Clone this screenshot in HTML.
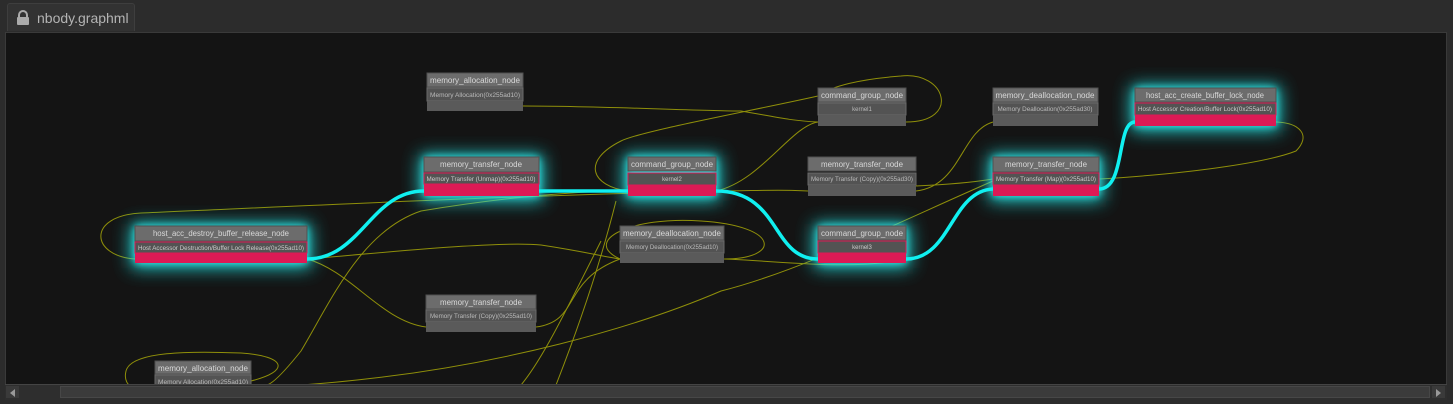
<!DOCTYPE html>
<html><head><meta charset="utf-8"><style>
html,body{margin:0;padding:0;width:1453px;height:404px;overflow:hidden;background:#2c2c2c;font-family:"Liberation Sans",sans-serif}
.tab{position:absolute;left:7px;top:3px;width:128px;height:28px;background:#323232;border:1px solid #3e3e3e;border-bottom:none;border-radius:3px 3px 0 0;box-sizing:border-box}
.tab span{position:absolute;left:29px;top:6px;font-size:14px;color:#b4b4b4}
.canvas{position:absolute;left:5px;top:32px;width:1442px;height:352px;background:#141414;border:1px solid #3a3a3a;border-bottom:none;box-sizing:border-box;overflow:hidden}
.sb{position:absolute;left:5px;top:384px;width:1442px;height:15px;background:#2e2e2e;border-top:1px solid #444}
.thumb{position:absolute;left:55px;top:1px;width:1370px;height:12px;background:#3b3b3b;border:1px solid #474747;box-sizing:border-box}
.btn{position:absolute;top:1px;width:13px;height:12px;background:#3a3a3a}
</style></head><body>
<div class="tab">
<svg style="position:absolute;left:7px;top:6px" width="16" height="15" viewBox="0 0 16 15"><path d="M4 7V5a4 4 0 0 1 8 0v2" fill="none" stroke="#aaa" stroke-width="2"/><rect x="2" y="7" width="12" height="8" rx="1" fill="#aaa"/></svg>
<span>nbody.graphml</span></div>
<div class="canvas">
<svg width="1442" height="352" viewBox="5 32 1442 352" xmlns="http://www.w3.org/2000/svg" style="position:absolute;left:0;top:0">
<defs>
<filter id="g" x="-50%" y="-100%" width="200%" height="300%"><feGaussianBlur stdDeviation="9"/></filter>
<filter id="g2" x="-50%" y="-100%" width="200%" height="300%"><feGaussianBlur stdDeviation="4"/></filter>
</defs>
<g fill="none" stroke="#8f8f0a" stroke-width="1">
<path d="M522 105 C600 105 700 110 740 110 C770 115 790 120 817 121"/>
<path d="M905 121 C960 121 945 70 900 75 C860 78 830 85 817 95 C750 110 640 130 620 140 C580 160 590 185 627 190"/>
<path d="M715 190 C760 180 790 125 817 121"/>
<path d="M715 190 C750 190 780 188 807 190"/>
<path d="M915 190 C960 185 960 130 992 121"/>
<path d="M1098 178 C1200 172 1270 160 1295 150 C1310 135 1300 122 1275 121"/>
<path d="M915 185 C960 183 980 180 992 178"/>
<path d="M134 258 C90 255 85 215 140 212 C300 205 500 195 715 190"/>
<path d="M306 258 C400 250 500 240 540 244 C580 250 600 255 619 258"/>
<path d="M306 258 C350 270 380 320 425 326"/>
<path d="M723 258 C780 258 780 225 700 220 C630 215 580 240 619 258"/>
<path d="M535 326 C580 320 560 280 619 258"/>
<path d="M627 190 C560 190 480 200 420 210 C360 230 330 300 300 350 C280 375 270 384 265 384"/>
<path d="M723 258 C780 260 850 270 905 258"/>
<path d="M300 384 C500 370 650 320 720 290 C800 270 900 220 992 180"/>
<path d="M250 380 C290 370 285 355 240 352 C190 350 130 350 125 370 C123 378 126 382 128 384"/>
<path d="M615 200 C600 260 580 320 555 384"/>
<path d="M600 240 C560 320 540 360 520 384"/>
</g>
<g fill="#20e0e0" filter="url(#g)" opacity="0.9">
<rect x="419" y="154" width="123" height="46"/><rect x="623" y="154" width="96" height="46"/>
<rect x="130" y="223" width="180" height="44"/><rect x="813" y="223" width="96" height="44"/>
<rect x="988" y="154" width="114" height="46"/><rect x="1130" y="85" width="149" height="45"/>
</g>
<g fill="#30f0f0" filter="url(#g2)">
<rect x="423" y="156" width="115" height="39"/><rect x="627" y="156" width="88" height="39"/>
<rect x="134" y="225" width="172" height="37"/><rect x="817" y="225" width="88" height="37"/>
<rect x="992" y="156" width="106" height="39"/><rect x="1134" y="87" width="141" height="38"/>
</g>
<g fill="none" stroke="#10f0f0" stroke-width="3.5">
<path d="M306 258 C360 258 370 190 423 190"/>
<path d="M538 190 L627 190"/>
<path d="M715 190 C780 190 770 258 817 258"/>
<path d="M905 258 C950 258 950 190 992 188"/>
<path d="M1098 188 C1125 188 1115 121 1134 121"/>
</g>
<g font-family="Liberation Sans,sans-serif" text-anchor="middle">
<rect x="426" y="72" width="96" height="14" fill="#6c6c6c" stroke="#505050"/><text x="474" y="82" font-size="8" fill="#d8d8d8" textLength="90" lengthAdjust="spacingAndGlyphs">memory_allocation_node</text>
<rect x="426" y="87" width="96" height="13" fill="#535353" stroke="#6a6a6a"/><text x="474" y="96" font-size="6" fill="#bbb" textLength="90" lengthAdjust="spacingAndGlyphs">Memory Allocation(0x255ad10)</text>
<rect x="426" y="100" width="96" height="10" fill="#5a5a5a"/>
<rect x="817" y="87" width="88" height="14" fill="#6c6c6c" stroke="#505050"/><text x="861" y="97" font-size="8" fill="#d8d8d8" textLength="82" lengthAdjust="spacingAndGlyphs">command_group_node</text>
<rect x="817" y="102" width="88" height="12" fill="#535353" stroke="#6a6a6a"/><text x="861" y="110" font-size="6" fill="#bbb">kernel1</text>
<rect x="817" y="114" width="88" height="11" fill="#5a5a5a"/>
<rect x="992" y="87" width="105" height="14" fill="#6c6c6c" stroke="#505050"/><text x="1044" y="97" font-size="8" fill="#d8d8d8" textLength="99" lengthAdjust="spacingAndGlyphs">memory_deallocation_node</text>
<rect x="992" y="102" width="105" height="12" fill="#535353" stroke="#6a6a6a"/><text x="1044" y="110" font-size="6" fill="#bbb" textLength="95" lengthAdjust="spacingAndGlyphs">Memory Deallocation(0x255ad30)</text>
<rect x="992" y="114" width="105" height="11" fill="#5a5a5a"/>
<rect x="1134" y="87" width="141" height="14" fill="#6c6c6c" stroke="#505050"/><text x="1204" y="97" font-size="8" fill="#d8d8d8" textLength="118" lengthAdjust="spacingAndGlyphs">host_acc_create_buffer_lock_node</text>
<rect x="1134" y="102" width="141" height="12" fill="#535353" stroke="#dc1a55"/><text x="1204" y="110" font-size="6" fill="#ccc" textLength="134" lengthAdjust="spacingAndGlyphs">Host Accessor Creation/Buffer Lock(0x255ad10)</text>
<rect x="1134" y="114" width="141" height="11" fill="#dc1a55"/>
<rect x="423" y="156" width="115" height="15" fill="#6c6c6c" stroke="#505050"/><text x="480" y="166" font-size="8" fill="#d8d8d8" textLength="82" lengthAdjust="spacingAndGlyphs">memory_transfer_node</text>
<rect x="423" y="172" width="115" height="11" fill="#535353" stroke="#dc1a55"/><text x="480" y="180" font-size="6" fill="#ccc" textLength="109" lengthAdjust="spacingAndGlyphs">Memory Transfer (Unmap)(0x255ad10)</text>
<rect x="423" y="183" width="115" height="12" fill="#dc1a55"/>
<rect x="627" y="156" width="88" height="14" fill="#6c6c6c" stroke="#505050"/><text x="671" y="166" font-size="8" fill="#d8d8d8" textLength="82" lengthAdjust="spacingAndGlyphs">command_group_node</text>
<rect x="627" y="172" width="88" height="12" fill="#535353" stroke="#dc1a55"/><text x="671" y="180" font-size="6" fill="#ccc">kernel2</text>
<rect x="627" y="184" width="88" height="11" fill="#dc1a55"/>
<rect x="807" y="156" width="108" height="14" fill="#6c6c6c" stroke="#505050"/><text x="861" y="166" font-size="8" fill="#d8d8d8" textLength="82" lengthAdjust="spacingAndGlyphs">memory_transfer_node</text>
<rect x="807" y="172" width="108" height="12" fill="#535353" stroke="#6a6a6a"/><text x="861" y="180" font-size="6" fill="#bbb" textLength="102" lengthAdjust="spacingAndGlyphs">Memory Transfer (Copy)(0x255ad30)</text>
<rect x="807" y="184" width="108" height="11" fill="#5a5a5a"/>
<rect x="992" y="156" width="106" height="15" fill="#6c6c6c" stroke="#505050"/><text x="1045" y="166" font-size="8" fill="#d8d8d8" textLength="82" lengthAdjust="spacingAndGlyphs">memory_transfer_node</text>
<rect x="992" y="172" width="106" height="12" fill="#535353" stroke="#dc1a55"/><text x="1045" y="180" font-size="6" fill="#ccc" textLength="100" lengthAdjust="spacingAndGlyphs">Memory Transfer (Map)(0x255ad10)</text>
<rect x="992" y="184" width="106" height="11" fill="#dc1a55"/>
<rect x="134" y="225" width="172" height="15" fill="#6c6c6c" stroke="#505050"/><text x="220" y="235" font-size="8" fill="#d8d8d8" textLength="136" lengthAdjust="spacingAndGlyphs">host_acc_destroy_buffer_release_node</text>
<rect x="134" y="241" width="172" height="11" fill="#535353" stroke="#dc1a55"/><text x="220" y="249" font-size="6" fill="#ccc" textLength="166" lengthAdjust="spacingAndGlyphs">Host Accessor Destruction/Buffer Lock Release(0x255ad10)</text>
<rect x="134" y="252" width="172" height="10" fill="#dc1a55"/>
<rect x="619" y="225" width="104" height="14" fill="#6c6c6c" stroke="#505050"/><text x="671" y="235" font-size="8" fill="#d8d8d8" textLength="98" lengthAdjust="spacingAndGlyphs">memory_deallocation_node</text>
<rect x="619" y="240" width="104" height="12" fill="#535353" stroke="#6a6a6a"/><text x="671" y="248" font-size="6" fill="#bbb" textLength="92" lengthAdjust="spacingAndGlyphs">Memory Deallocation(0x255ad10)</text>
<rect x="619" y="252" width="104" height="10" fill="#5a5a5a"/>
<rect x="817" y="225" width="88" height="14" fill="#6c6c6c" stroke="#505050"/><text x="861" y="235" font-size="8" fill="#d8d8d8" textLength="82" lengthAdjust="spacingAndGlyphs">command_group_node</text>
<rect x="817" y="240" width="88" height="12" fill="#535353" stroke="#dc1a55"/><text x="861" y="248" font-size="6" fill="#ccc">kernel3</text>
<rect x="817" y="252" width="88" height="10" fill="#dc1a55"/>
<rect x="425" y="294" width="110" height="14" fill="#6c6c6c" stroke="#505050"/><text x="480" y="304" font-size="8" fill="#d8d8d8" textLength="82" lengthAdjust="spacingAndGlyphs">memory_transfer_node</text>
<rect x="425" y="309" width="110" height="12" fill="#535353" stroke="#6a6a6a"/><text x="480" y="317" font-size="6" fill="#bbb" textLength="102" lengthAdjust="spacingAndGlyphs">Memory Transfer (Copy)(0x255ad10)</text>
<rect x="425" y="321" width="110" height="10" fill="#5a5a5a"/>
<rect x="154" y="360" width="96" height="13" fill="#6c6c6c" stroke="#505050"/><text x="202" y="370" font-size="8" fill="#d8d8d8" textLength="90" lengthAdjust="spacingAndGlyphs">memory_allocation_node</text>
<rect x="154" y="374" width="96" height="12" fill="#535353" stroke="#6a6a6a"/><text x="202" y="383" font-size="6" fill="#bbb" textLength="90" lengthAdjust="spacingAndGlyphs">Memory Allocation(0x255ad10)</text>
</g>
</svg>
</div>
<div class="sb">
<div class="btn" style="left:1px"><svg width="13" height="12"><path d="M9 2L4 6L9 10Z" fill="#999"/></svg></div>
<div class="thumb"></div>
<div class="btn" style="right:2px"><svg width="13" height="12"><path d="M4 2L9 6L4 10Z" fill="#999"/></svg></div>
</div>
</body></html>
